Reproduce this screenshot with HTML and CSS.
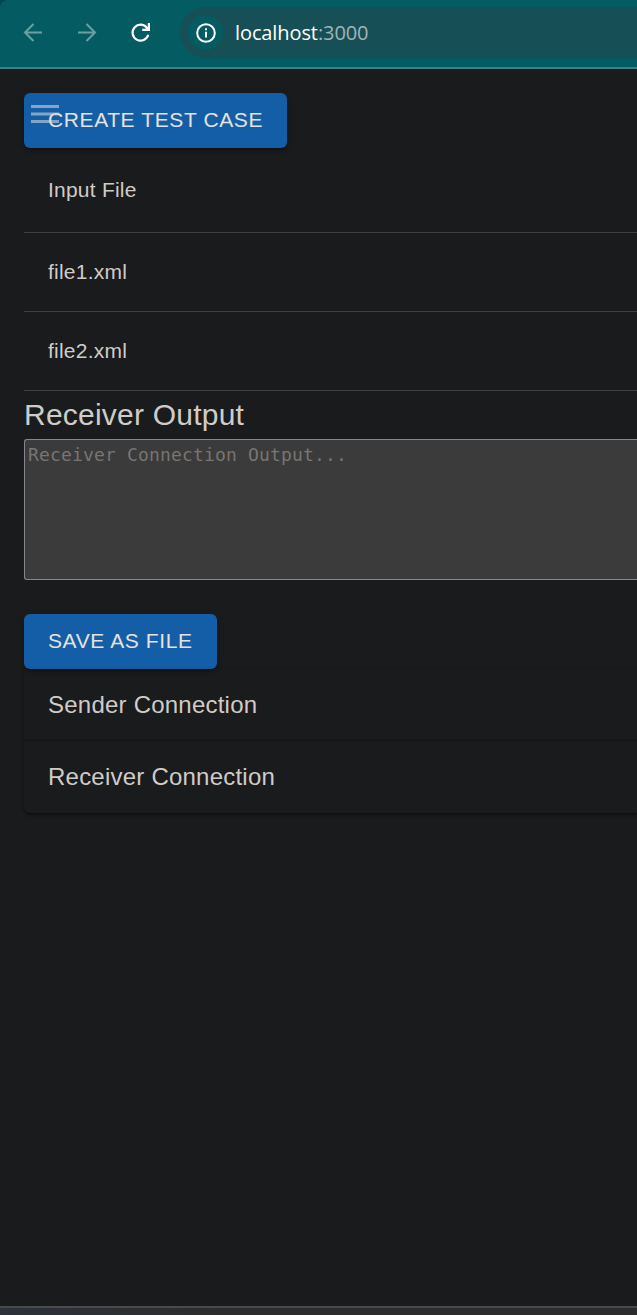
FILE: index.html
```html
<!DOCTYPE html>
<html lang="en">
<head>
<meta charset="utf-8">
<title>localhost:3000</title>
<link rel="stylesheet" href="styles.css">
</head>
<body>
<div class="window">
  <header class="toolbar">
    <svg class="nav-icon dim" viewBox="0 0 22 22"><path d="M20 10.500H3M11.500 2L3 10.500L11.500 19"/></svg>
    <svg class="nav-icon dim" viewBox="0 0 22 22"><path d="M2 10.500H19M10.500 2L19 10.500L10.500 19"/></svg>
    <svg class="nav-icon" viewBox="0 0 22 22"><path class="reload" d="M17.300 6.300A8 8 0 1 0 18.300 12.800"/><path class="reload-head" d="M20 1V9H12.200V6.800H15.500L17.800 4.500V1Z"/></svg>
    <div class="address">
      <span class="site-info">
        <svg class="info-icon" viewBox="0 0 20 20"><circle cx="10" cy="10" r="8.800"/><path d="M10 8.700V14.500M10 5.200V7.200"/></svg>
      </span>
      <span class="url"><span class="host">localhost</span><span class="port">:3000</span></span>
    </div>
  </header>
  <main class="page">
    <button class="btn">CREATE TEST CASE</button>
    <svg class="menu-icon" viewBox="0 0 28 20"><path d="M0 2.500H28M0 10H28M0 17.500H28"/></svg>
    <div class="files">
      <div class="cell head">Input File</div>
      <div class="cell">file1.xml</div>
      <div class="cell">file2.xml</div>
    </div>
    <h6 class="heading">Receiver Output</h6>
    <textarea class="output" placeholder="Receiver Connection Output..."></textarea>
    <button class="btn save">SAVE AS FILE</button>
    <div class="accordions">
      <div class="accordion">Sender Connection</div>
      <div class="accordion">Receiver Connection</div>
    </div>
  </main>
  <footer class="desktop-edge"></footer>
</div>
</body>
</html>
```
FILE: styles.css
```css
* { box-sizing: border-box; }
body {
  margin: 0;
  overflow: hidden;
  background: #02454a;
  font-family: "Liberation Sans", Arial, sans-serif;
  color: #cfccc7;
}
.window { height: 1315px; display: flex; flex-direction: column; }
.toolbar {
  flex: none;
  display: flex;
  align-items: center;
  height: 69px;
  padding: 0 0 2px 22px;
  border-bottom: 2px solid #408083;
  border-radius: 8px 0 0 0;
  background: #045c62;
}
.nav-icon {
  width: 22px;
  height: 22px;
  margin-right: 32px;
  fill: none;
  stroke: #fff;
  stroke-width: 2;
}
.nav-icon.dim { stroke: #6b9fa2; }
.reload { stroke-width: 2.200; }
.reload-head { fill: #fff; stroke: none; }
.address {
  flex: 1;
  display: flex;
  align-items: center;
  height: 51px;
  margin-left: -4px;
  padding-left: 8px;
  border-radius: 26px 0 0 26px;
  background: #174f56;
}
.site-info {
  display: flex;
  align-items: center;
  justify-content: center;
  width: 35px;
  height: 35px;
  border-radius: 50%;
  background: #045c62;
}
.info-icon { width: 20px; height: 20px; fill: none; stroke: #fff; stroke-width: 2; }
.url {
  margin-left: 12px;
  font: 20px/28px "Open Sans", "Noto Sans", sans-serif;
  letter-spacing: -0.1px;
  white-space: nowrap;
}
.host { color: #fff; }
.port { color: #a0b5b8; }
.page {
  position: relative;
  flex: 1;
  display: flex;
  flex-direction: column;
  align-items: flex-start;
  padding: 24px 0 0 24px;
  background: #1a1b1d;
}
.btn {
  flex: none;
  height: 55px;
  padding: 0 24px 2px;
  border: 0;
  border-radius: 6px;
  background: #145ea8;
  color: #e5e2dd;
  font: 21px/37px "Liberation Sans", Arial, sans-serif;
  letter-spacing: 0.6px;
  white-space: nowrap;
  box-shadow: 0 4px 2px -3px rgba(0,0,0,.2), 0 3px 3px rgba(0,0,0,.14), 0 1px 7px rgba(0,0,0,.12);
}
.menu-icon {
  position: absolute;
  left: 31px;
  top: 35px;
  width: 28px;
  height: 20px;
  stroke: rgba(220,218,214,.57);
  stroke-width: 3;
}
.files { align-self: stretch; }
.cell {
  height: 79px;
  padding: 24px;
  border-bottom: 1px solid #3d4042;
  font-size: 21px;
  line-height: 30px;
  letter-spacing: 0.225px;
}
.cell.head { height: 85px; line-height: 36px; }
.heading {
  margin: 0;
  font-size: 30px;
  font-weight: 400;
  line-height: 48px;
  letter-spacing: 0.225px;
}
.output {
  align-self: stretch;
  height: 141px;
  padding: 3px;
  border: 1px solid #85878a;
  border-right: 0;
  border-radius: 3px 0 0 3px;
  background: #3b3b3b;
  font: 18px/23px "DejaVu Sans Mono", monospace;
  letter-spacing: 0.16px;
  resize: none;
}
.output::placeholder { color: #787572; }
.save { margin-top: 34px; }
.accordions {
  align-self: stretch;
  border-radius: 0 0 0 6px;
  box-shadow: 0 3px 2px -2px rgba(0,0,0,.35), 0 2px 2px rgba(0,0,0,.2), 0 1px 4px rgba(0,0,0,.16);
}
.accordion {
  height: 72px;
  padding: 0 24px;
  font-size: 24px;
  line-height: 72px;
  letter-spacing: 0.225px;
}
.accordion + .accordion { box-shadow: 0 -1px 1px #141517; }
.desktop-edge {
  flex: none;
  height: 9px;
  border-top: 2px solid #4a4a4a;
  background: linear-gradient(90deg, #2c323a, #2c2c2c 35%);
}
```
